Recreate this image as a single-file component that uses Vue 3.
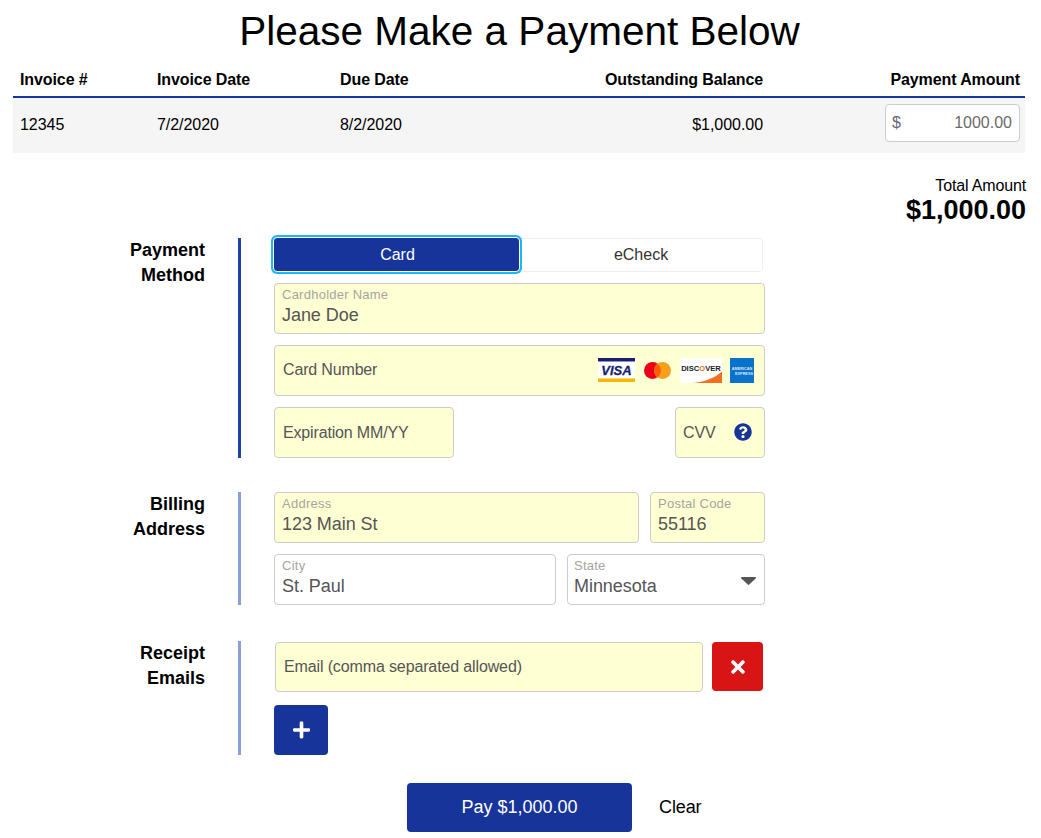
<template>
  <div class="page">
    <h1>Please Make a Payment Below</h1>

    <div class="content">
      <table class="invoices">
        <thead>
          <tr>
            <th class="col-num">Invoice #</th>
            <th class="col-date">Invoice Date</th>
            <th class="col-due">Due Date</th>
            <th class="col-bal right">Outstanding Balance</th>
            <th class="col-pay right">Payment Amount</th>
          </tr>
        </thead>
        <tbody>
          <tr v-for="inv in invoices" :key="inv.number">
            <td>{{ inv.number }}</td>
            <td>{{ inv.date }}</td>
            <td>{{ inv.due }}</td>
            <td class="right">{{ inv.balance }}</td>
            <td class="right">
              <div class="amount">
                <span class="dollar">$</span>
                <input v-model="inv.amount" />
              </div>
            </td>
          </tr>
        </tbody>
      </table>

      <div class="total">
        <div class="total-label">Total Amount</div>
        <div class="total-value">$1,000.00</div>
      </div>

      <section class="section">
        <div class="section-label">Payment<br />Method</div>
        <div class="section-body active">
          <div class="toggle">
            <button class="tab selected">Card</button>
            <button class="tab">eCheck</button>
          </div>

          <div class="field filled">
            <label>Cardholder Name</label>
            <input v-model="form.name" />
          </div>

          <div class="field filled plain">
            <input placeholder="Card Number" />
            <div class="cards">
              <svg class="visa" width="37" height="24" viewBox="0 0 37 24">
                <rect width="37" height="24" fill="#fff" />
                <rect width="37" height="3.5" fill="#1a1f71" />
                <rect y="20.5" width="37" height="3.5" fill="#f7b600" />
                <text x="18.5" y="17" text-anchor="middle" class="visa-text">VISA</text>
              </svg>
              <svg width="27" height="17" viewBox="0 0 27 17">
                <circle cx="8.5" cy="8.5" r="8.5" fill="#eb001b" />
                <circle cx="18.5" cy="8.5" r="8.5" fill="#f79e1b" />
                <path d="M13.5 1.64a8.5 8.5 0 0 1 0 13.72a8.5 8.5 0 0 1 0-13.72z" fill="#ff5f00" />
              </svg>
              <svg class="discover" width="42" height="25" viewBox="0 0 42 25">
                <rect width="42" height="25" fill="#fff" />
                <path d="M42 13.5V25H13C24 24 35 20 42 13.5z" fill="#f26e21" />
                <text x="21" y="13" text-anchor="middle" class="disc-text">DISC<tspan fill="#f26e21">O</tspan>VER</text>
              </svg>
              <svg width="24" height="25" viewBox="0 0 24 25">
                <rect width="24" height="25" fill="#0a72c9" />
                <text x="12" y="11.5" text-anchor="middle" class="amex-text">AMERICAN</text>
                <text x="14" y="16.5" text-anchor="middle" class="amex-text">EXPRESS</text>
              </svg>
            </div>
          </div>

          <div class="row between">
            <div class="field filled plain expiry">
              <input placeholder="Expiration MM/YY" />
            </div>
            <div class="field filled plain cvv">
              <input placeholder="CVV" />
              <svg class="help" width="18" height="18" viewBox="0 0 512 512">
                <path fill="#16349a" d="M504 256c0 136.997-111.043 248-248 248S8 392.997 8 256C8 119.083 119.043 8 256 8s248 111.083 248 248zM262.655 90c-54.497 0-89.255 22.957-116.549 63.758-3.536 5.286-2.353 12.415 2.715 16.258l34.699 26.31c5.205 3.947 12.621 3.008 16.665-2.122 17.864-22.658 30.113-35.797 57.303-35.797 20.429 0 45.698 13.148 45.698 32.958 0 14.976-12.363 22.667-32.534 33.976C247.128 238.528 216 254.941 216 296v4c0 6.627 5.373 12 12 12h56c6.627 0 12-5.373 12-12v-1.333c0-28.462 83.186-29.647 83.186-106.667 0-58.002-60.165-102-116.531-102zM256 338c-25.365 0-46 20.635-46 46 0 25.364 20.635 46 46 46s46-20.636 46-46c0-25.365-20.635-46-46-46z" />
              </svg>
            </div>
          </div>
        </div>
      </section>

      <section class="section billing">
        <div class="section-label">Billing<br />Address</div>
        <div class="section-body">
          <div class="row">
            <div class="field filled address">
              <label>Address</label>
              <input v-model="form.address" />
            </div>
            <div class="field filled postal">
              <label>Postal Code</label>
              <input v-model="form.postal" />
            </div>
          </div>
          <div class="row">
            <div class="field city">
              <label>City</label>
              <input v-model="form.city" />
            </div>
            <div class="field state">
              <label>State</label>
              <select v-model="form.state">
                <option>Minnesota</option>
                <option>Wisconsin</option>
              </select>
              <svg class="caret" width="15" height="8" viewBox="0 0 15 8">
                <path fill="#555" d="M1 0h13c.9 0 1.3 1 .7 1.6L8.2 7.6c-.4.4-1 .4-1.4 0L.3 1.6C-.3 1 .1 0 1 0z" />
              </svg>
            </div>
          </div>
        </div>
      </section>

      <section class="section receipts">
        <div class="section-label">Receipt<br />Emails</div>
        <div class="section-body">
          <div class="email-row">
            <input class="email" placeholder="Email (comma separated allowed)" />
            <button class="icon-btn remove" aria-label="Remove">
              <svg width="14" height="20" viewBox="0 0 352 512">
                <path fill="#fff" d="M242.72 256l100.07-100.07c12.28-12.28 12.28-32.19 0-44.48l-22.24-22.24c-12.28-12.28-32.19-12.28-44.48 0L176 189.28 75.93 89.21c-12.28-12.28-32.19-12.28-44.48 0L9.21 111.45c-12.28 12.28-12.28 32.19 0 44.48L109.28 256 9.21 356.07c-12.28 12.28-12.28 32.19 0 44.48l22.24 22.24c12.28 12.28 32.2 12.28 44.48 0L176 322.72l100.07 100.07c12.28 12.28 32.2 12.28 44.48 0l22.24-22.24c12.28-12.28 12.28-32.19 0-44.48L242.72 256z" />
              </svg>
            </button>
          </div>
          <button class="icon-btn add" aria-label="Add">
            <svg width="17" height="20" viewBox="0 0 448 512">
              <path fill="#fff" d="M416 208H272V64c0-17.67-14.33-32-32-32h-32c-17.67 0-32 14.33-32 32v144H32c-17.67 0-32 14.33-32 32v32c0 17.67 14.33 32 32 32h144v144c0 17.67 14.33 32 32 32h32c17.67 0 32-14.33 32-32V304h144c17.67 0 32-14.33 32-32v-32c0-17.67-14.33-32-32-32z" />
            </svg>
          </button>
        </div>
      </section>

      <div class="actions">
        <button class="pay">Pay $1,000.00</button>
        <button class="clear">Clear</button>
      </div>
    </div>
  </div>
</template>

<script setup>
import { ref } from 'vue'

const invoices = ref([
  { number: '12345', date: '7/2/2020', due: '8/2/2020', balance: '$1,000.00', amount: '1000.00' }
])

const form = ref({
  name: 'Jane Doe',
  address: '123 Main St',
  postal: '55116',
  city: 'St. Paul',
  state: 'Minnesota'
})
</script>

<style scoped>
.page {
  width: 1041px;
  height: 838px;
  overflow: hidden;
  font-family: "Liberation Sans", Arial, sans-serif;
  font-size: 16px;
  color: #000;
}

h1 {
  margin: 0;
  padding: 8px 2px 0 0;
  height: 66px;
  box-sizing: border-box;
  font-size: 40.5px;
  line-height: 46px;
  font-weight: 400;
  text-align: center;
}

.content {
  width: 1012px;
  margin-left: 13px;
}

.invoices {
  width: 1012px;
  table-layout: fixed;
  border-collapse: collapse;
}

.invoices th {
  height: 31px;
  padding: 0 7px 3px;
  box-sizing: border-box;
  font-weight: 700;
  letter-spacing: -0.1px;
  text-align: left;
  border-bottom: 2px solid #16349a;
}

.invoices td {
  height: 56px;
  padding: 0 7px 2px;
  box-sizing: border-box;
  background: #f5f5f5;
  letter-spacing: -0.05px;
}

.invoices .right {
  text-align: right;
}

.invoices .col-num { width: 137px; }
.invoices .col-date { width: 183px; }
.invoices .col-due { width: 183px; }
.invoices .col-bal { width: 254px; }
.invoices .col-pay { width: 255px; padding-right: 5px; }
.invoices td:last-child { padding-right: 5px; }

.amount {
  display: flex;
  align-items: center;
  width: 135px;
  height: 38px;
  margin: 0 0 4px auto;
  padding: 0 7px 0 6px;
  box-sizing: border-box;
  background: #fff;
  border: 1px solid #ccc;
  border-radius: 4px;
  color: #667;
}

.amount input {
  flex: 1;
  min-width: 0;
  border: none;
  background: transparent;
  padding: 0;
  font: inherit;
  color: #6b6b6b;
  text-align: right;
  outline: none;
}

.total {
  margin-right: -1px;
  padding-top: 24px;
  text-align: right;
}

.total-label {
  line-height: 18px;
  letter-spacing: -0.15px;
}

.total-value {
  font-size: 27px;
  font-weight: 700;
  line-height: 31px;
}

.section {
  display: flex;
  margin-top: 12px;
}

.section.billing {
  margin-top: 34px;
}

.section.receipts {
  margin-top: 36px;
}

.section-label {
  width: 192px;
  margin-right: 33px;
  font-size: 18px;
  font-weight: 700;
  line-height: 25px;
  text-align: right;
}

.section-body {
  display: flex;
  flex-direction: column;
  gap: 11px;
  width: 491px;
  padding-left: 33px;
  border-left: 3px solid #8b9ed6;
}

.section-body.active {
  border-left-color: #1e40af;
}

.toggle {
  display: flex;
  width: 489px;
  height: 34px;
  box-sizing: border-box;
  border: 1px solid #eee;
  border-radius: 4px;
}

.tab {
  flex: 1;
  border: none;
  border-radius: 0 4px 4px 0;
  background: #fff;
  padding: 0;
  font: inherit;
  color: #333;
}

.tab.selected {
  position: relative;
  z-index: 1;
  flex: none;
  width: 247px;
  height: 35px;
  margin: -2px 0 -1px -2px;
  padding-left: 2px;
  background: #16349a;
  color: #fff;
  border: 1px solid #fff;
  border-radius: 4px;
  box-shadow: 0 0 0 2px #1cb8f0;
}

.field {
  position: relative;
  display: flex;
  flex-direction: column;
  height: 51px;
  padding: 4px 7px 0;
  box-sizing: border-box;
  background: #fff;
  border: 1px solid #ccc;
  border-radius: 4px;
}

.field.filled {
  background: #ffffd4;
}

.field.plain {
  flex-direction: row;
  align-items: center;
  padding: 0 10px 2px 8px;
}

.field label {
  font-size: 13px;
  line-height: 14px;
  letter-spacing: 0.25px;
  color: #a5a5a0;
}

.field input,
.field select {
  height: 28px;
  min-width: 0;
  width: 100%;
  margin-top: -1px;
  border: none;
  background: transparent;
  padding: 0;
  font: inherit;
  font-size: 18px;
  letter-spacing: -0.05px;
  color: #555;
  outline: none;
  appearance: none;
}

.field.plain input {
  flex: 1;
  margin-top: 0;
  font-size: 16px;
  letter-spacing: -0.16px;
}

.field.expiry input,
.field.cvv input {
  padding-top: 2px;
}

input::placeholder {
  color: #555;
  opacity: 1;
}

.cards {
  display: flex;
  align-items: center;
  gap: 9px;
  margin-top: 1px;
}

.discover {
  margin-right: -1px;
}

.visa-text {
  font: italic 700 13px "Liberation Sans", sans-serif;
  fill: #1a1f71;
  stroke: #1a1f71;
  stroke-width: 0.3;
}

.disc-text {
  font: 700 7.6px "Liberation Sans", sans-serif;
  fill: #222;
}

.amex-text {
  font: 700 3.8px "Liberation Sans", sans-serif;
  fill: #d6eafb;
}

.row {
  display: flex;
  gap: 11px;
}

.row.between {
  justify-content: space-between;
}

.expiry { width: 180px; }
.field.cvv { width: 90px; padding-left: 7px; padding-right: 12px; }
.address { width: 365px; }
.postal { width: 115px; }
.city { width: 282px; }
.state { width: 198px; padding-left: 6px; }

.caret {
  position: absolute;
  right: 8px;
  top: 22px;
}

.email-row {
  display: flex;
  align-items: flex-start;
  gap: 9px;
  margin-top: 1px;
  margin-left: 1px;
  margin-bottom: 2px;
}

.email {
  width: 428px;
  height: 50px;
  padding: 0 8px;
  box-sizing: border-box;
  background: #ffffd4;
  border: 1px solid #ccc;
  border-radius: 4px;
  font: inherit;
  letter-spacing: -0.13px;
  color: #555;
  outline: none;
}

.icon-btn {
  display: flex;
  align-items: center;
  justify-content: center;
  border: none;
  border-radius: 4px;
  padding: 0;
}

.remove {
  width: 51px;
  height: 49px;
  background: #d91414;
}

.add {
  width: 54px;
  height: 50px;
  background: #16349a;
}

.actions {
  display: flex;
  align-items: center;
  gap: 27px;
  margin-top: 28px;
  margin-left: 394px;
}

.pay {
  width: 225px;
  height: 49px;
  border: none;
  border-radius: 4px;
  background: #16349a;
  color: #fff;
  font: inherit;
  font-size: 18px;
}

.clear {
  border: none;
  background: none;
  padding: 0;
  font: inherit;
  font-size: 18px;
  letter-spacing: -0.1px;
  color: #000;
}
</style>
